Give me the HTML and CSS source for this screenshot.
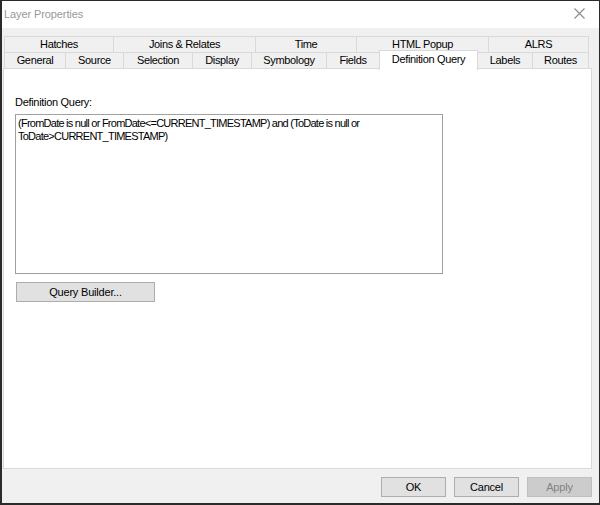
FILE: index.html
```html
<!DOCTYPE html>
<html lang="en">
<head>
  <meta charset="UTF-8" />
  <title>Layer Properties</title>
  <link rel="stylesheet" href="styles.css">
</head>
<body>
  <div class="window">
    <div class="titlebar">
      <span class="title">Layer Properties</span>
      <svg class="close" width="11" height="11" viewBox="0 0 11 11">
        <path d="M0.5 0.5 L10.5 10.5 M10.5 0.5 L0.5 10.5" stroke="#8a8a8a" stroke-width="1.1" fill="none"/>
      </svg>
    </div>
    <div class="client">
      <div class="tabs">
        <div class="tab-row">
          <div class="tab w110">Hatches</div>
          <div class="tab w142">Joins &amp; Relates</div>
          <div class="tab w101">Time</div>
          <div class="tab w132">HTML Popup</div>
          <div class="tab w100">ALRS</div>
        </div>
        <div class="tab-row">
          <div class="tab w62">General</div>
          <div class="tab w58">Source</div>
          <div class="tab w69">Selection</div>
          <div class="tab w59">Display</div>
          <div class="tab w75">Symbology</div>
          <div class="tab w53">Fields</div>
          <div class="tab w98 active">Definition Query</div>
          <div class="tab w55">Labels</div>
          <div class="tab w56">Routes</div>
        </div>
      </div>
      <div class="panel">
        <div class="field-label">Definition Query:</div>
        <div class="query-box">(FromDate is null or FromDate&lt;=CURRENT_TIMESTAMP) and (ToDate is null or<br>ToDate&gt;CURRENT_TIMESTAMP)</div>
        <button class="btn builder">Query Builder...</button>
      </div>
      <div class="footer">
        <button class="btn">OK</button>
        <button class="btn">Cancel</button>
        <button class="btn" disabled>Apply</button>
      </div>
    </div>
  </div>
</body>
</html>
```

FILE: styles.css
```css
* { box-sizing: border-box; }
html, body { margin: 0; height: 100%; }
body {
  background: #ffffff;
  font-family: 'Liberation Sans', Arial, sans-serif;
  font-size: 11px;
  color: #000;
}
.window {
  width: 600px;
  height: 505px;
  border: 1px solid #2b2b2b;
  border-left-width: 2px;
  border-bottom-width: 2px;
  display: flex;
  flex-direction: column;
  background: #f0f0f0;
}
.titlebar {
  height: 27px;
  background: #fff;
  display: flex;
  align-items: center;
  justify-content: space-between;
  padding: 0 14px 1px 2px;
}
.title {
  color: #999;
  font-size: 11px;
  letter-spacing: -0.1px;
}
.close { display: block; margin-top: -1px; }
.client {
  flex: 1;
  display: flex;
  flex-direction: column;
  padding: 8px 7px 0 1px;
}
.tabs {
  padding-left: 1px;
  position: relative;
  z-index: 1;
}
.tab-row {
  display: flex;
  height: 17px;
}
.tab-row + .tab-row { margin-top: -1px; }
.tab {
  height: 17px;
  border: 1px solid #d9d9d9;
  margin-left: -1px;
  background: #f0f0f0;
  display: flex;
  align-items: center;
  justify-content: center;
  letter-spacing: -0.35px;
  line-height: 1;
  padding-bottom: 0;
}
.tab:first-child { margin-left: 0; }
.tab.active {
  background: #fff;
  height: 20px;
  margin-top: -2px;
  border-bottom: none;
  padding-bottom: 3px;
}
.w53 { width: 54px; }
.w55 { width: 56px; }
.w56 { width: 57px; }
.w58 { width: 59px; }
.w59 { width: 60px; }
.w62 { width: 62px; }
.w69 { width: 70px; }
.w75 { width: 76px; }
.w98 { width: 99px; }
.w100 { width: 101px; }
.w101 { width: 102px; }
.w110 { width: 110px; }
.w132 { width: 133px; }
.w142 { width: 143px; }
.panel {
  height: 401px;
  margin-top: -1px;
  background: #fff;
  border: 1px solid #d9d9d9;
  padding: 27px 0 0 11px;
  display: flex;
  flex-direction: column;
  align-items: flex-start;
}
.field-label {
  letter-spacing: -0.3px;
  height: 18px;
}
.query-box {
  width: 428px;
  height: 160px;
  border: 1px solid #a0a0a0;
  padding: 2px 2px 0 2px;
  line-height: 13px;
  letter-spacing: -0.75px;
}
.btn {
  font-family: inherit;
  font-size: 11px;
  color: #000;
  background: #e1e1e1;
  border: 1px solid #adadad;
  height: 20px;
  padding: 0;
  letter-spacing: -0.2px;
}
.builder {
  width: 139px;
  margin: 8px 0 0 1px;
}
.footer {
  flex: 1;
  display: flex;
  justify-content: flex-end;
  gap: 8px;
  padding-top: 8px;
}
.footer .btn { width: 65px; }
.footer .btn:disabled {
  background: #cccccc;
  border-color: #bfbfbf;
  color: #838383;
}
```
